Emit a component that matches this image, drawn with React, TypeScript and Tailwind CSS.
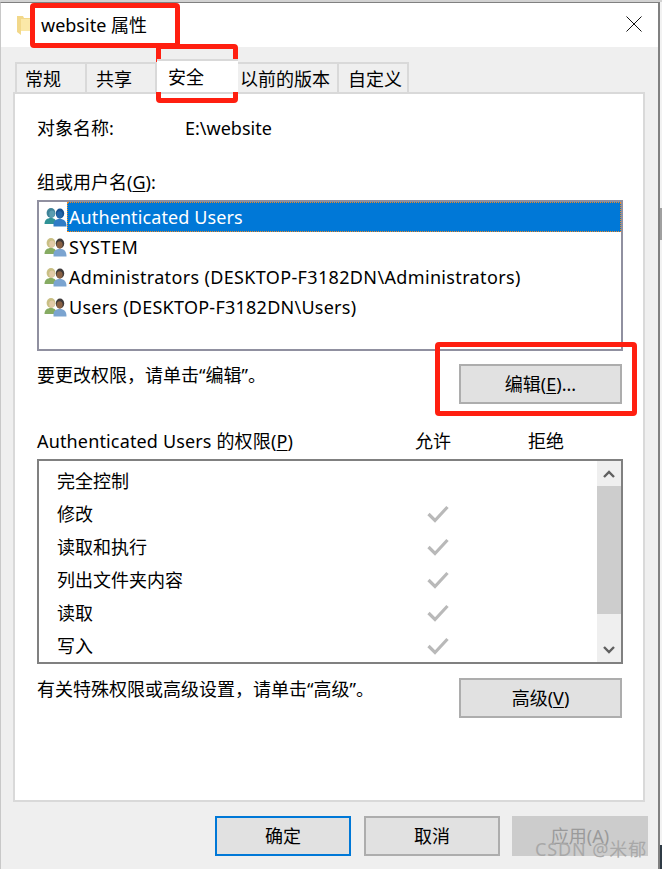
import React from "react";

function UsersIcon({ selected }: { selected?: boolean }) {
  const hairL = selected ? "#3f8398" : "#c9bf84";
  const faceL = selected ? "#5a9db0" : "#e2cba8";
  const bodyL = selected ? "#2f9296" : "#86ab62";
  const hairR = selected ? "#16508f" : "#3f3a3a";
  const faceR = selected ? "#2266a8" : "#8a6244";
  const bodyR = selected ? "#2f7cc6" : "#7ba4d0";
  return (
    <svg width="23" height="19" viewBox="0 0 23 19" className="shrink-0">
      <ellipse cx="7" cy="5" rx="4.4" ry="5" fill={hairL} />
      <ellipse cx="8" cy="6" rx="2.8" ry="3.6" fill={faceL} />
      <path d="M0.5 16 C0.5 12 3 10 7 10 C10.5 10 12.5 12 12.5 16 Z" fill={bodyL} />
      <ellipse cx="16" cy="5.5" rx="4.2" ry="5" fill={hairR} />
      <ellipse cx="15.6" cy="6.8" rx="3" ry="3.6" fill={faceR} />
      <path d="M9.5 18.5 L9.5 16 C9.5 13 12 11 16 11 C20 11 22.5 13 22.5 18.5 Z" fill={bodyR} />
    </svg>
  );
}

function Check() {
  return (
    <svg width="22" height="18" viewBox="0 0 22 18" className="block">
      <path d="M1.5 9 L8 15.5 L20.5 2" fill="none" stroke="#b9b9b9" strokeWidth="3.2" />
    </svg>
  );
}

const tones = {
  normal: "border-[#adadad] bg-[#e1e1e1] text-black",
  primary: "border-[#0078d7] bg-[#e1e1e1] text-black",
  disabled: "border-[#cccccc] bg-[#cccccc] text-[#9a9a9a]",
};

function Btn({
  children,
  className = "",
  tone = "normal",
}: {
  children: React.ReactNode;
  className?: string;
  tone?: keyof typeof tones;
}) {
  return (
    <div className={`flex h-10 items-center justify-center border-2 text-[18px] leading-none ${tones[tone]} ${className}`}>
      {children}
    </div>
  );
}

function Tab({ children, className = "" }: { children: React.ReactNode; className?: string }) {
  return (
    <div className={`flex h-[30px] items-center border-2 border-b-0 border-l-0 border-[#d9d9d9] bg-[#efefef] pt-[2px] text-[18px] leading-none text-black ${className}`}>
      {children}
    </div>
  );
}

const users: [string, string][] = [
  ["Authenticated Users", "tracking-[0.1px]"],
  ["SYSTEM", "tracking-[0.5px]"],
  ["Administrators (DESKTOP-F3182DN\\Administrators)", "tracking-[0.35px]"],
  ["Users (DESKTOP-F3182DN\\Users)", "tracking-[0.25px]"],
];

const perms: [string, boolean][] = [
  ["完全控制", false],
  ["修改", true],
  ["读取和执行", true],
  ["列出文件夹内容", true],
  ["读取", true],
  ["写入", true],
];

export default function App() {
  return (
    <div
      className="relative h-[869px] w-[662px] overflow-hidden bg-[#f2f2f2] text-[18px] text-black"
      style={{ fontFamily: '"Noto Sans", "Noto Sans CJK SC", sans-serif' }}
    >
      <div className="h-[2px] bg-[#d2d2d2]" />
      <div className="flex h-[867px] w-[660px] flex-col border-l border-r-2 border-t border-[#808080] border-l-[#c8c8c8] bg-[#efefef]">
        {/* title bar */}
        <div className="flex h-[44px] shrink-0 items-center justify-between bg-white pl-[15px] pr-[16px]">
          <div className="flex items-center gap-[9px]">
            <svg width="16" height="20" viewBox="0 0 16 20">
              <path d="M1 1 L7 1 L8 3 L15 3 L15 16 L5 16 L5 20 L1 17 Z" fill="#f2d88a" />
              <path d="M5 4 L15 4 L15 16 L5 16 Z" fill="#fbe8a8" />
            </svg>
            <span className="text-[18px] leading-none">website 属性</span>
          </div>
          <svg width="16" height="16" viewBox="0 0 16 16" className="-mt-[2px]">
            <path d="M0.5 0.5 L15.5 15.5 M15.5 0.5 L0.5 15.5" stroke="#111" strokeWidth="1" fill="none" />
          </svg>
        </div>

        {/* tabs */}
        <div className="ml-[12px] mt-[12px] w-[632px] flex-1">
          <div className="relative z-10 flex h-[33px] items-end pl-[2px]">
            <Tab className="w-[72px] border-l-2 pl-[8px]">常规</Tab>
            <Tab className="w-[70px] pl-[9px]">共享</Tab>
            <div className="flex h-[33px] w-[81px] items-start border-t-2 border-[#d9d9d9] bg-white pl-[11px] pt-[7px] text-[18px] leading-none">安全</div>
            <Tab className="w-[101px] pl-[2px]">以前的版本</Tab>
            <Tab className="w-[70px] pl-[9px]">自定义</Tab>
          </div>

          {/* panel */}
          <div className="flex h-[710px] flex-col border-2 border-[#d9d9d9] bg-white pl-[22px] pr-[20px]">
            <div className="mt-[22px] flex h-6 items-center leading-none">
              <span className="w-[148px]">对象名称:</span>
              <span>E:\website</span>
            </div>
            <div className="mt-[30px] flex h-6 items-center leading-none">
              组或用户名(<span className="underline underline-offset-2">G</span>):
            </div>

            <div className="mt-[6px] flex h-[151px] flex-col border-2 border-[#9090a0] pl-[5px]">
              {users.map(([u, t], i) => (
                <div key={u} className="flex h-[30px] items-center leading-none">
                  <UsersIcon selected={i === 0} />
                  <span
                    className={
                      i === 0
                        ? `flex h-[30px] flex-1 items-center border border-dotted border-[#f08a24] bg-[#0078d7] pl-[1px] text-white ${t}`
                        : `pl-[2px] ${t}`
                    }
                  >
                    {u}
                  </span>
                </div>
              ))}
            </div>

            <div className="mt-[13px] flex items-start justify-between pr-[1px]">
              <span className="leading-[22px]">{"要更改权限\uFF0C请单击\u201C编辑\u201D\u3002"}</span>
              <Btn className="w-[163px]">
                编辑(<span className="underline underline-offset-2">E</span>)...
              </Btn>
            </div>

            <div className="mt-[25px] flex h-6 items-center leading-none">
              <span className="w-[378px] tracking-[0.15px]">
                Authenticated Users 的权限(<span className="underline underline-offset-2">P</span>)
              </span>
              <span className="w-[113px]">允许</span>
              <span>拒绝</span>
            </div>

            <div className="mt-[6px] flex h-[205px] border-2 border-[#808080]">
              <div className="flex-1 pl-[18px] pt-[3px]">
                {perms.map(([p, c]) => (
                  <div key={p} className="flex h-[33px] items-center leading-none">
                    <span className="w-[370px]">{p}</span>
                    {c && <Check />}
                  </div>
                ))}
              </div>
              <div className="flex w-[24px] flex-col bg-[#efefef]">
                <div className="flex h-[25px] items-center justify-center">
                  <svg width="12" height="8" viewBox="0 0 12 8">
                    <path d="M1 7 L6 2 L11 7" fill="none" stroke="#606060" strokeWidth="2.4" />
                  </svg>
                </div>
                <div className="h-[128px] bg-[#cdcdcd]" />
                <div className="flex-1" />
                <div className="flex h-[25px] items-center justify-center">
                  <svg width="12" height="8" viewBox="0 0 12 8">
                    <path d="M1 1 L6 6 L11 1" fill="none" stroke="#606060" strokeWidth="2.4" />
                  </svg>
                </div>
              </div>
            </div>

            <div className="mt-[14px] flex items-start justify-between pr-[1px]">
              <span className="leading-[22px]">{"有关特殊权限或高级设置\uFF0C请单击\u201C高级\u201D\u3002"}</span>
              <Btn className="w-[163px]">
                高级(<span className="underline underline-offset-2">V</span>)
              </Btn>
            </div>
          </div>
        </div>

        {/* footer */}
        <div className="mb-[13px] flex justify-end pr-[10px]">
          <Btn className="w-[136px]" tone="primary">确定</Btn>
          <Btn className="ml-[13px] w-[136px]">取消</Btn>
          <Btn className="ml-[12px] w-[136px]" tone="disabled">应用(A)</Btn>
        </div>
      </div>

      {/* what shows of the windows behind, at the right edge */}
      <div className="absolute right-0 top-[208px] h-[32px] w-[2px] bg-[#a0a0a0]" />
      <div className="absolute bottom-0 right-0 h-[24px] w-[2px] bg-[#2f3b45]" />

      {/* annotations */}
      <div className="absolute left-[30px] top-[3px] h-[45px] w-[150px] rounded-[4px] border-[5px] border-[#ff1f10]" />
      <div className="absolute left-[156px] top-[44px] h-[59px] w-[82px] rounded-[4px] border-[5px] border-[#ff1f10]" />
      <div className="absolute left-[435px] top-[342px] h-[74px] w-[202px] rounded-[4px] border-[5px] border-[#ff1f10]" />
      <div className="absolute left-[535px] top-[840px] text-[18px] leading-none tracking-[0.9px] text-[#a8a8a8]">CSDN @米郁</div>
    </div>
  );
}
